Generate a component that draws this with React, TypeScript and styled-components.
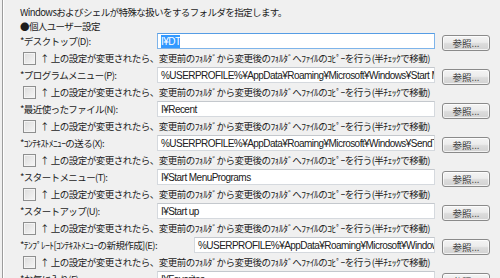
import React from "react";
import styled, { createGlobalStyle } from "styled-components";

const Global = createGlobalStyle`
  html, body { margin: 0; padding: 0; background: #f0f0f0; }
  body { font-family: "Noto Sans CJK JP", "Liberation Sans", sans-serif; overflow: hidden; }
`;

const Frame = styled.div`
  width: 497px;
  height: 278px;
  margin-left: 2px;
  border-left: 1px solid #9c9c9c;
  box-shadow: inset 1px 0 0 #ffffff;
  background: #f0f0f0;
  padding: 5px 9px 0 17px;
  box-sizing: border-box;
  overflow: hidden;
  color: #1c1c1c;
  font-size: 9.5px;
  letter-spacing: -0.6px;
`;

const Line = styled.div`
  height: 14px;
  line-height: 14px;
  white-space: nowrap;
`;

const Row = styled.div`
  display: flex;
  align-items: flex-start;
  height: 17px;
  white-space: nowrap;
`;

const Label = styled.div<{ $wide?: boolean }>`
  width: ${(p) => (p.$wide ? "174px" : "137px")};
  flex: none;
  line-height: 17px;
  overflow: hidden;
`;

const Field = styled.div<{ $focus?: boolean }>`
  flex: 1;
  min-width: 0;
  height: 16px;
  box-sizing: border-box;
  background: #ffffff;
  border: 1px solid ${(p) => (p.$focus ? "#7eb4ea" : "#d5d9de")};
  border-top-color: ${(p) => (p.$focus ? "#569de5" : "#c4c8cd")};
  padding: 0 3px;
  line-height: 15px;
  overflow: hidden;
  font-family: "Liberation Sans", "Noto Sans CJK JP", sans-serif;
  font-size: 10px;
  letter-spacing: -0.55px;
  color: #202020;
`;

const Selected = styled.span`
  background: #3399ff;
  color: #ffffff;
  padding: 1px 0;
`;

const Button = styled.div`
  flex: none;
  width: 48px;
  height: 16px;
  margin: 2px 0 0 7px;
  box-sizing: border-box;
  border: 1px solid #8a8a8a;
  border-radius: 3px;
  background: linear-gradient(#f4f4f4 0%, #ececec 45%, #dcdcdc 55%, #d2d2d2 100%);
  box-shadow: inset 0 0 0 1px rgba(255, 255, 255, 0.7);
  text-align: center;
  line-height: 14px;
  font-size: 9.5px;
  color: #3a3a3a;
  letter-spacing: 0;
`;

const CheckRow = styled.div`
  display: flex;
  align-items: center;
  height: 17px;
  white-space: nowrap;
`;

const Box = styled.span`
  flex: none;
  width: 11px;
  height: 11px;
  margin: 0 4px 0 3px;
  border: 1px solid #8e8f8f;
  background: linear-gradient(135deg, #dcdcdc, #f6f6f6);
  box-shadow: inset 0 0 0 1px #f4f4f4;
`;

const CheckText = styled.span`
  line-height: 17px;
  letter-spacing: -0.5px;
`;

type Item = { label: string; value: React.ReactNode; wide?: boolean; focus?: boolean };

const items: Item[] = [
  { label: "*デスクトップ(D):", value: <Selected>I¥DT</Selected>, focus: true },
  { label: "*プログラムメニュー(P):", value: "%USERPROFILE%¥AppData¥Roaming¥Microsoft¥Windows¥Start Menu" },
  { label: "*最近使ったファイル(N):", value: "I¥Recent" },
  { label: "*ｺﾝﾃｷｽﾄﾒﾆｭｰの送る(X):", value: "%USERPROFILE%¥AppData¥Roaming¥Microsoft¥Windows¥SendTo" },
  { label: "*スタートメニュー(T):", value: "I¥Start MenuPrograms" },
  { label: "*スタートアップ(U):", value: "I¥Start up" },
  {
    label: "*ﾃﾝﾌﾟﾚｰﾄ[ｺﾝﾃｷｽﾄﾒﾆｭｰの新規作成](E):",
    value: "%USERPROFILE%¥AppData¥Roaming¥Microsoft¥Windows¥Templates",
    wide: true,
  },
  { label: "*お気に入り(F):", value: "I¥Favorites" },
];

const checkText =
  "↑ 上の設定が変更されたら、変更前のﾌｫﾙﾀﾞから変更後のﾌｫﾙﾀﾞへﾌｧｲﾙのｺﾋﾟｰを行う(半ﾁｪｯｸで移動)";

export default function App() {
  return (
    <>
      <Global />
      <Frame>
        <Line>Windowsおよびシェルが特殊な扱いをするフォルダを指定します。</Line>
        <Line>●個人ユーザー設定</Line>
        {items.map((it, i) => (
          <React.Fragment key={i}>
            <Row>
              <Label $wide={it.wide}>{it.label}</Label>
              <Field $focus={it.focus}>{it.value}</Field>
              <Button>参照...</Button>
            </Row>
            {i < items.length - 1 && (
              <CheckRow>
                <Box />
                <CheckText>{checkText}</CheckText>
              </CheckRow>
            )}
          </React.Fragment>
        ))}
      </Frame>
    </>
  );
}
